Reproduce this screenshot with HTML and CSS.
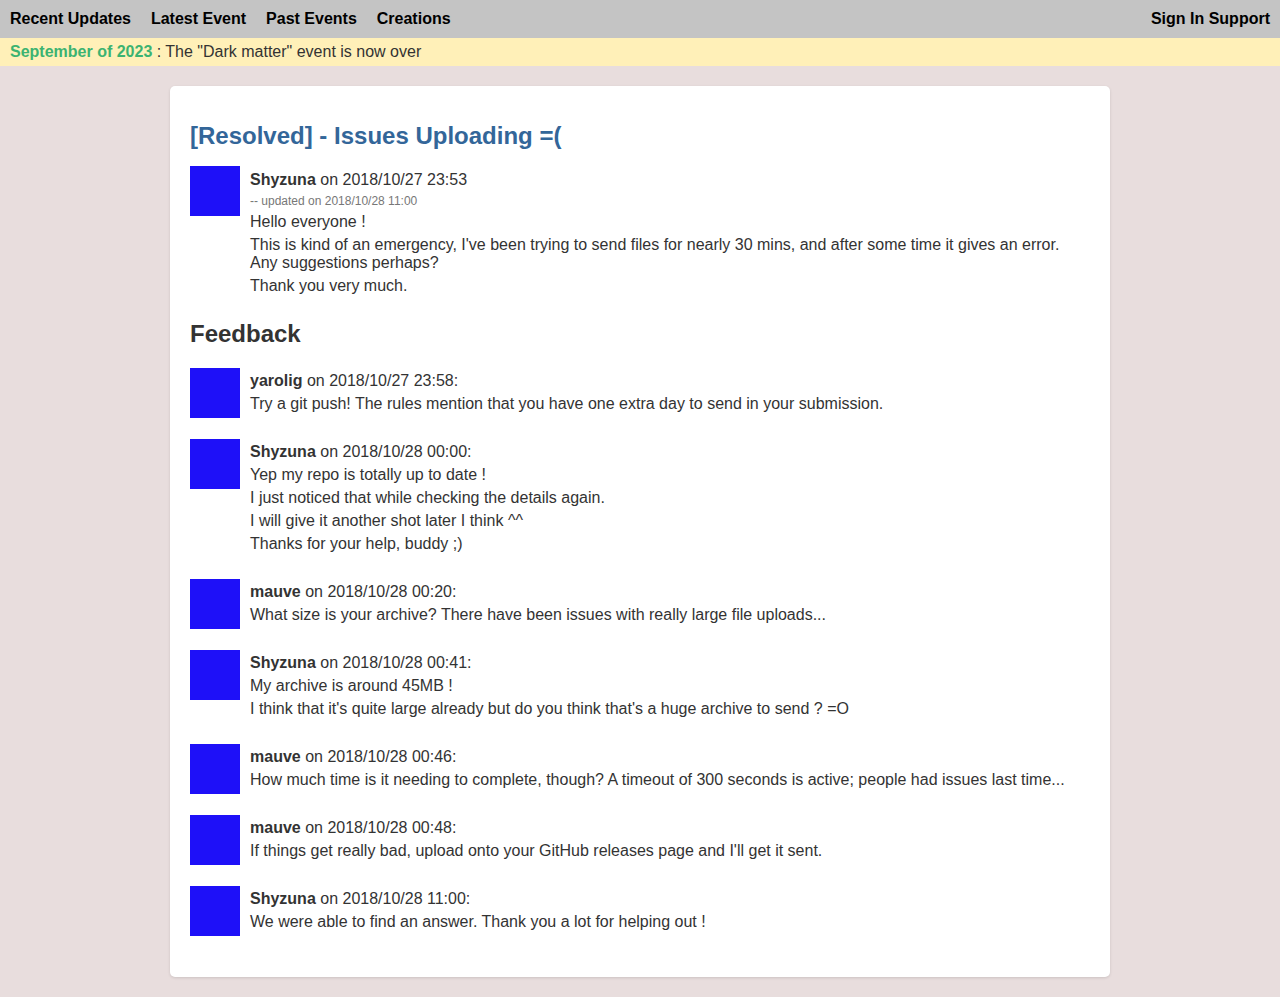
FILE: index.html
```html
<!DOCTYPE html>
<html>
<head>
<meta charset="utf-8">
<title>[Resolved] - Issues Uploading =(</title>
<link rel="stylesheet" href="styles.css">
</head>
<body>
<nav class="topbar">
  <div class="nav-left">
    <a class="nav-link" href="#">Recent Updates</a>
    <a class="nav-link" href="#">Latest Event</a>
    <a class="nav-link" href="#">Past Events</a>
    <a class="nav-link" href="#">Creations</a>
  </div>
  <div class="nav-right">
    <a class="nav-link" href="#">Sign In</a> <a class="nav-link" href="#">Support</a>
  </div>
</nav>
<div class="banner"><span class="banner-date">September of 2023</span> : The "Dark matter" event is now over</div>

<main class="card">
  <h1 class="title">[Resolved] - Issues Uploading =(</h1>
  <div class="post">
    <div class="avatar"></div>
    <div class="post-body">
      <p class="line"><b>Shyzuna</b> on 2018/10/27 23:53</p>
      <p class="line updated">-- updated on 2018/10/28 11:00</p>
      <p class="line">Hello everyone !</p>
      <p class="line">This is kind of an emergency, I've been trying to send files for nearly 30 mins, and after some time it gives an error. Any suggestions perhaps?</p>
      <p class="line">Thank you very much.</p>
    </div>
  </div>

  <h2 class="feedback-title">Feedback</h2>

  <div class="comment">
    <div class="avatar"></div>
    <div class="comment-body">
      <p class="line"><b>yarolig</b> on 2018/10/27 23:58:</p>
      <p class="line">Try a git push! The rules mention that you have one extra day to send in your submission.</p>
    </div>
  </div>
  <div class="comment">
    <div class="avatar"></div>
    <div class="comment-body">
      <p class="line"><b>Shyzuna</b> on 2018/10/28 00:00:</p>
      <p class="line">Yep my repo is totally up to date !</p>
      <p class="line">I just noticed that while checking the details again.</p>
      <p class="line">I will give it another shot later I think ^^</p>
      <p class="line">Thanks for your help, buddy ;)</p>
    </div>
  </div>
  <div class="comment">
    <div class="avatar"></div>
    <div class="comment-body">
      <p class="line"><b>mauve</b> on 2018/10/28 00:20:</p>
      <p class="line">What size is your archive? There have been issues with really large file uploads...</p>
    </div>
  </div>
  <div class="comment">
    <div class="avatar"></div>
    <div class="comment-body">
      <p class="line"><b>Shyzuna</b> on 2018/10/28 00:41:</p>
      <p class="line">My archive is around 45MB !</p>
      <p class="line">I think that it's quite large already but do you think that's a huge archive to send ? =O</p>
    </div>
  </div>
  <div class="comment">
    <div class="avatar"></div>
    <div class="comment-body">
      <p class="line"><b>mauve</b> on 2018/10/28 00:46:</p>
      <p class="line">How much time is it needing to complete, though? A timeout of 300 seconds is active; people had issues last time...</p>
    </div>
  </div>
  <div class="comment">
    <div class="avatar"></div>
    <div class="comment-body">
      <p class="line"><b>mauve</b> on 2018/10/28 00:48:</p>
      <p class="line">If things get really bad, upload onto your GitHub releases page and I'll get it sent.</p>
    </div>
  </div>
  <div class="comment">
    <div class="avatar"></div>
    <div class="comment-body">
      <p class="line"><b>Shyzuna</b> on 2018/10/28 11:00:</p>
      <p class="line">We were able to find an answer. Thank you a lot for helping out !</p>
    </div>
  </div>
</main>
</body>
</html>
```

FILE: styles.css
```css
html, body {
  margin: 0;
  padding: 0;
}
body {
  background: #e8dddd;
  font-family: "Liberation Sans", Arial, sans-serif;
  font-size: 16px;
  line-height: 18px;
  color: #333333;
  padding-bottom: 20px;
}
.topbar {
  display: flex;
  justify-content: space-between;
  align-items: center;
  background: #c4c4c4;
  padding: 10px 10px;
  height: 18px;
}
.nav-left {
  display: flex;
  gap: 20px;
}
.nav-link {
  color: #000;
  font-weight: bold;
  text-decoration: none;
}
.banner {
  background: #fff0b8;
  padding: 5px 10px 5px 10px;
  height: 18px;
  color: #333;
}
.banner-date {
  color: #3cb371;
  font-weight: bold;
}
.card {
  display: block;
  width: 900px;
  margin: 20px auto 0;
  background: #fff;
  border-radius: 5px;
  padding: 20px;
  box-shadow: 0 1px 3px rgba(0, 0, 0, 0.12);
}
.title {
  font-size: 24px;
  line-height: 27.6px;
  font-weight: bold;
  color: #336699;
  margin: 16px 0 16px;
}
.post, .comment {
  display: flex;
  align-items: flex-start;
}
.comment {
  margin-bottom: 21px;
}
.avatar {
  flex: 0 0 50px;
  width: 50px;
  height: 50px;
  background: #1e10f8;
  margin-right: 10px;
}
.post-body {
  flex: 1;
  padding-top: 5px;
}
.comment-body {
  flex: 1;
  padding-top: 4px;
}
.line {
  margin: 0 0 5px;
}
.updated {
  font-size: 12px;
  line-height: 14px;
  color: #777;
}
.feedback-title {
  font-size: 24px;
  line-height: 27.6px;
  font-weight: bold;
  color: #333;
  margin: 20px 0 21px;
}
```
